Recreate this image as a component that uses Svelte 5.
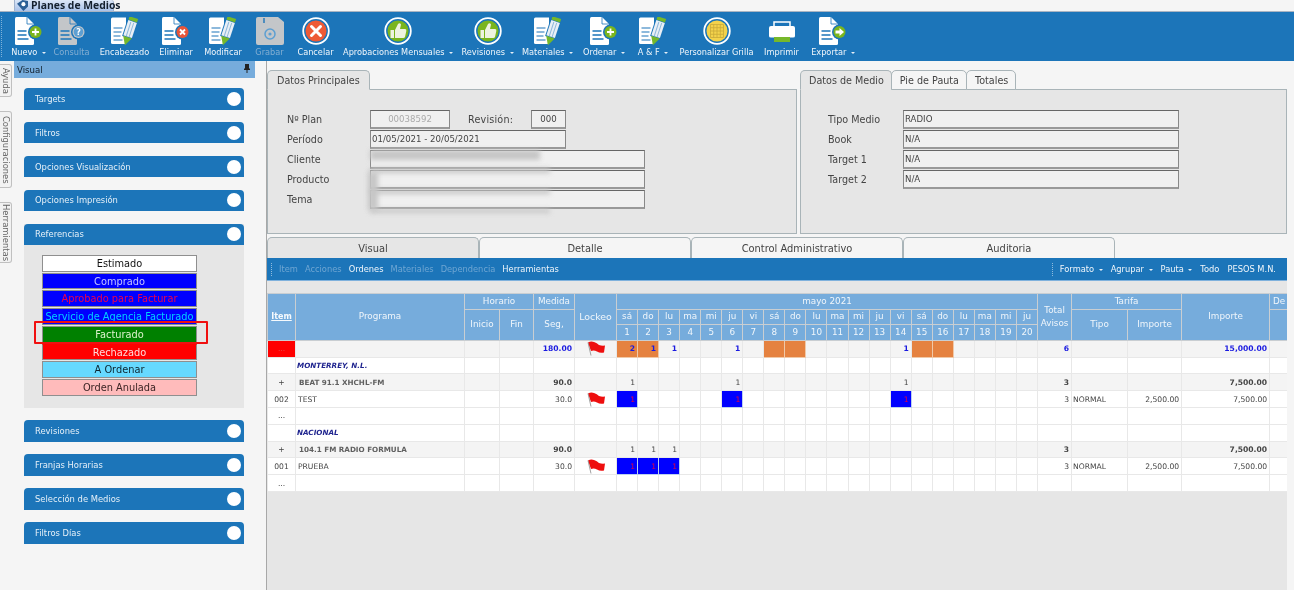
<script>
  const tools = [
    { label: 'Nuevo', icon: 'doc', badge: 'plus', w: 33, m: 0, caret: true },
    { label: 'Consulta', icon: 'docgray', w: 37, m: 8, dim: true },
    { label: 'Encabezado', icon: 'pencil', w: 51, m: 9 },
    { label: 'Eliminar', icon: 'doc', badge: 'x', w: 32, m: 10 },
    { label: 'Modificar', icon: 'pencil', w: 40, m: 11 },
    { label: 'Grabar', icon: 'floppy', w: 29, m: 12, dim: true },
    { label: 'Cancelar', icon: 'cancel', w: 37, m: 13 },
    { label: 'Aprobaciones Mensuales', icon: 'thumb', w: 108, m: 10, caret: true },
    { label: 'Revisiones', icon: 'thumb', w: 51, m: 10, caret: true },
    { label: 'Materiales', icon: 'pencil', w: 51, m: 9, caret: true },
    { label: 'Ordenar', icon: 'doc', badge: 'plus', w: 42, m: 10, caret: true },
    { label: 'A & F', icon: 'pencil', w: 28, m: 14, caret: true },
    { label: 'Personalizar Grilla', icon: 'grid', w: 75, m: 12 },
    { label: 'Imprimir', icon: 'printer', w: 35, m: 10 },
    { label: 'Exportar', icon: 'doc', badge: 'arrow', w: 46, m: 11, caret: true }
  ];
  const sideTabs = [
    { label: 'Ayuda', h: 33 },
    { label: 'Configuraciones', h: 77 },
    { label: 'Herramientas', h: 61 }
  ];
  const topSections = ['Targets', 'Filtros', 'Opciones Visualización', 'Opciones Impresión'];
  const bottomSections = ['Revisiones', 'Franjas Horarias', 'Selección de Medios', 'Filtros Días'];
  const legend = [
    { t: 'Estimado', c: 'est' },
    { t: 'Comprado', c: 'com' },
    { t: 'Aprobado para Facturar', c: 'apr' },
    { t: 'Servicio de Agencia Facturado', c: 'ser' },
    { t: 'Facturado', c: 'fac' },
    { t: 'Rechazado', c: 'rec' },
    { t: 'A Ordenar', c: 'ord' },
    { t: 'Orden Anulada', c: 'anu' }
  ];
  const names = ['sá', 'do', 'lu', 'ma', 'mi', 'ju', 'vi'];
  const days = Array.from({ length: 20 }, (_, i) => ({ n: i + 1, name: names[i % 7] }));
  const rows = [
    { kind: 'sum', item: '...', medida: '180.00', flag: true, marks: { 1: ['2', 'or'], 2: ['1', 'or'], 3: ['1', ''], 6: ['1', ''], 8: ['', 'or'], 9: ['', 'or'], 14: ['1', ''], 15: ['', 'or'], 16: ['', 'or'] }, total: '6', imp: '15,000.00' },
    { kind: 'group', prog: 'MONTERREY, N.L.' },
    { kind: 'sub', item: '+', prog: 'BEAT 91.1 XHCHL-FM', medida: '90.0', marks: { 1: ['1', ''], 6: ['1', ''], 14: ['1', ''] }, total: '3', imp: '7,500.00' },
    { kind: 'line', item: '002', prog: 'TEST', medida: '30.0', flag: true, marks: { 1: ['1', 'bl'], 6: ['1', 'bl'], 14: ['1', 'bl'] }, total: '3', tipo: 'NORMAL', tar: '2,500.00', imp: '7,500.00' },
    { kind: 'dots', item: '...' },
    { kind: 'group', prog: 'NACIONAL' },
    { kind: 'sub', item: '+', prog: '104.1 FM RADIO FORMULA', medida: '90.0', marks: { 1: ['1', ''], 2: ['1', ''], 3: ['1', ''] }, total: '3', imp: '7,500.00' },
    { kind: 'line', item: '001', prog: 'PRUEBA', medida: '30.0', flag: true, marks: { 1: ['1', 'bl'], 2: ['1', 'bl'], 3: ['1', 'bl'] }, total: '3', tipo: 'NORMAL', tar: '2,500.00', imp: '7,500.00' },
    { kind: 'dots', item: '...' }
  ];
</script>

{#snippet badge(kind)}
  {#if kind === 'plus'}
    <circle cx="20.5" cy="15" r="7.5" fill="#1c75b9" /><circle cx="20.5" cy="15" r="6" fill="#7ab51d" />
    <path d="M20.5 11.5v7M17 15h7" stroke="#fff" stroke-width="1.8" />
  {:else if kind === 'x'}
    <circle cx="20.5" cy="15" r="7.5" fill="#1c75b9" /><circle cx="20.5" cy="15" r="6" fill="#e8553a" />
    <path d="M18 12.5l5 5M23 12.5l-5 5" stroke="#fff" stroke-width="1.8" />
  {:else if kind === 'arrow'}
    <circle cx="20.5" cy="15" r="7.5" fill="#1c75b9" /><circle cx="20.5" cy="15" r="6" fill="#7ab51d" />
    <path d="M16.5 13.5h4v-2.5l4.5 4-4.5 4v-2.5h-4z" fill="#fff" />
  {/if}
{/snippet}

{#snippet page(fill, line)}
  <path d="M0 1.5Q0 0 1.5 0H12l7 7v19.5q0 1.5-1.5 1.5H1.5Q0 28 0 26.5z" fill={fill} />
  <path d="M12 0v7h7" fill="none" stroke={line} stroke-width="0.8" />
  <path d="M2.5 14h9M2.5 18h9M2.5 22h11" stroke={line} stroke-width="1.3" />
{/snippet}

{#snippet icon(t)}
  <svg class="ic" viewBox="0 0 28 28" aria-hidden="true">
    {#if t.icon === 'doc'}
      {@render page('#fff', '#1c75b9')}
      {@render badge(t.badge)}
    {:else if t.icon === 'docgray'}
      {@render page('#c3c6c9', '#1c75b9')}
      <circle cx="20.5" cy="15" r="7.5" fill="#1c75b9" /><circle cx="20.5" cy="15" r="6" fill="#c3c6c9" />
      <circle cx="20.5" cy="15" r="4.8" fill="#5d9fd2" />
      <text x="20.5" y="18.2" class="q">?</text>
    {:else if t.icon === 'pencil'}
      <path d="M0 2q0-1.500 1.500-1.500H15V27H1.500Q0 27 0 25.500z" fill="#fff" />
      <path d="M2.500 11h9M2.500 15h8M2.500 19h7M2.500 23h9" stroke="#1c75b9" stroke-width="1.200" />
      <g transform="translate(18.500 14) rotate(18)">
        <rect x="-5.500" y="-12" width="11" height="19" fill="#1c75b9" />
        <rect x="-4.500" y="-10" width="9" height="16" fill="#e9eff5" />
        <path d="M-1.500-9V6M1.500-9V6" stroke="#8fb9dc" stroke-width="1" />
        <rect x="-4.500" y="-14" width="9" height="3.500" fill="#76b82a" />
        <path d="M-4.500 6.500h9L0 15z" fill="#76b82a" />
      </g>
    {:else if t.icon === 'floppy'}
      <path d="M2 0h20l6 5v21q0 2-2 2H2q-2 0-2-2V2q0-2 2-2z" fill="#c3c6c9" />
      <path d="M8 0v5" stroke="#1c75b9" stroke-width="1.400" transform="translate(0 1)" />
      <circle cx="14" cy="17" r="5" fill="none" stroke="#5d9fd2" stroke-width="1.500" />
      <circle cx="14" cy="17" r="1.600" fill="#5d9fd2" />
    {:else if t.icon === 'cancel'}
      <circle cx="14" cy="14" r="12.800" fill="none" stroke="#fff" stroke-width="1.800" />
      <circle cx="14" cy="14" r="10.500" fill="#ee5a36" />
      <path d="M9.500 9.500l9 9M18.500 9.500l-9 9" stroke="#fff" stroke-width="3" stroke-linecap="round" />
    {:else if t.icon === 'thumb'}
      <circle cx="14" cy="14" r="12.800" fill="none" stroke="#fff" stroke-width="1.800" />
      <circle cx="14" cy="14" r="10.500" fill="#7ab51d" />
      <path d="M6.500 13h3.500v8H6.500zM11 13l3-6q1.800-1.500 3 .5l-1 4.500h5q1.800 0 1.300 2l-1.200 5.500q-.3 1.500-2 1.500H11z" fill="#eef3e0" />
    {:else if t.icon === 'grid'}
      <circle cx="14" cy="14" r="12.800" fill="none" stroke="#fff" stroke-width="1.800" />
      <circle cx="14" cy="14" r="10.500" fill="#f3d24b" />
      <path d="M7.500 7.500h13v13h-13zM7.500 10.700h13M7.500 14h13M7.500 17.300h13M10.700 7.500v13M14 7.500v13M17.300 7.500v13" fill="none" stroke="#c9a93a" stroke-width="0.800" />
    {:else if t.icon === 'printer'}
      <path d="M6 5h16v5H6z" fill="none" stroke="#fff" stroke-width="1.500" />
      <path d="M1 11q0-2 2-2h22q2 0 2 2v8q0 1.500-2 1.500H3q-2 0-2-1.500z" fill="#fff" />
      <path d="M6 20h16v5H6z" fill="#76b82a" />
    {/if}
  </svg>
{/snippet}

{#snippet flag()}
  <svg class="flag" viewBox="0 0 20 15" aria-hidden="true">
    <path d="M2 1.500q3-1.500 6-.5t5 3q3 1 6 .5l-1 7q-4 1-7-1-3-1.500-6-.5z" fill="#ee0e0e" />
    <path d="M2 1.500l3 13" stroke="#8a8a8a" stroke-width="0.800" />
  </svg>
{/snippet}

<div class="page">
  <div class="topstrip">
    <div class="apptab">
      <svg class="tabicon" viewBox="0 0 14 12" aria-hidden="true"><path d="M1 4l6-4 6 1v6l-5 5z" fill="#2b5f96" /><circle cx="8" cy="4.500" r="2.200" fill="#fff" /></svg>
      <span>Planes de Medios</span>
    </div>
  </div>

  <div class="toolbar">
    <div class="grip"></div>
    {#each tools as t}
      <div class="tool" class:dim={t.dim} style="width:{t.w}px;margin-left:{t.m}px">
        {@render icon(t)}
        <span class="tl">{t.label}{#if t.caret}<i class="caret"></i>{/if}</span>
      </div>
    {/each}
  </div>

  <div class="work">
    <div class="sidetabs">
      {#each sideTabs as s}
        <div class="sidetab" style="height:{s.h}px"><span>{s.label}</span></div>
      {/each}
    </div>

    <aside class="visual">
      <div class="vhead"><span>Visual</span>
        <svg class="pin" viewBox="0 0 8 9" aria-hidden="true"><path d="M2 0h4v4l1 1v1H4.500v3h-1V6H1V5l1-1z" fill="#222" /></svg>
      </div>
      <div class="accordion">
        {#each topSections as s}
          <div class="acc"><span>{s}</span><b></b></div>
        {/each}
        <div class="openblock">
          <div class="acc"><span>Referencias</span><b></b></div>
          <div class="legend">
            {#each legend as l}
              <div class="lg {l.c}">{l.t}</div>
            {/each}
          </div>
        </div>
        {#each bottomSections as s}
          <div class="acc"><span>{s}</span><b></b></div>
        {/each}
      </div>
      <div class="redmark"></div>
    </aside>

    <main class="content">
      <div class="panels">
        <section class="pane left">
          <div class="tabs"><div class="tab on">Datos Principales</div></div>
          <div class="body form">
            <div class="frow"><label>Nº Plan</label><div class="inp plan">00038592</div><label class="rev">Revisión:</label><div class="inp revv">000</div></div>
            <div class="frow"><label>Período</label><div class="inp per">01/05/2021 - 20/05/2021</div></div>
            <div class="frow"><label>Cliente</label><div class="inp long"></div></div>
            <div class="frow"><label>Producto</label><div class="inp long"></div></div>
            <div class="frow"><label>Tema</label><div class="inp long"></div></div>
            <div class="smear s1"></div>
            <div class="smear s2"></div>
            <div class="smear s3"></div>
            <div class="smear s4"></div>
            <div class="smear s5"></div>
          </div>
        </section>
        <section class="pane right">
          <div class="tabs">
            <div class="tab on">Datos de Medio</div>
            <div class="tab">Pie de Pauta</div>
            <div class="tab">Totales</div>
          </div>
          <div class="body form r">
            <div class="frow"><label>Tipo Medio</label><div class="inp wide">RADIO</div></div>
            <div class="frow"><label>Book</label><div class="inp wide">N/A</div></div>
            <div class="frow"><label>Target 1</label><div class="inp wide">N/A</div></div>
            <div class="frow"><label>Target 2</label><div class="inp wide">N/A</div></div>
          </div>
        </section>
      </div>

      <div class="gridtabs">
        <div class="gt on">Visual</div>
        <div class="gt">Detalle</div>
        <div class="gt">Control Administrativo</div>
        <div class="gt">Auditoria</div>
      </div>

      <div class="gridbar">
        <div class="gl">
          <i class="dots"></i>
          <span class="off">Item</span><span class="off">Acciones</span><span>Ordenes</span><span class="off">Materiales</span><span class="off">Dependencia</span><span>Herramientas</span>
        </div>
        <div class="gr">
          <i class="dots"></i>
          <span>Formato<i class="caret"></i></span><span>Agrupar<i class="caret"></i></span><span>Pauta<i class="caret"></i></span><span>Todo</span><span>PESOS M.N.</span>
        </div>
      </div>

      <div class="gridarea">
        <table>
          <colgroup>
            <col class="c28" /><col class="c169" /><col class="c35" /><col class="c34" /><col class="c41" /><col class="c42" />
            {#each days as d}<col class="cday" />{/each}
            <col class="c34" /><col class="c56" /><col class="c54" /><col class="c88" /><col class="c18" />
          </colgroup>
          <thead>
            <tr>
              <th rowspan="3"><u>Item</u></th>
              <th rowspan="3">Programa</th>
              <th colspan="2">Horario</th>
              <th>Medida</th>
              <th rowspan="3" class="lock">Lockeo</th>
              <th colspan="20">mayo 2021</th>
              <th rowspan="3">Total<br />Avisos</th>
              <th colspan="2">Tarifa</th>
              <th rowspan="3">Importe</th>
              <th class="de">De</th>
            </tr>
            <tr>
              <th rowspan="2">Inicio</th>
              <th rowspan="2">Fin</th>
              <th rowspan="2">Seg,</th>
              {#each days as d}<th>{d.name}</th>{/each}
              <th rowspan="2">Tipo</th>
              <th rowspan="2">Importe</th>
              <th rowspan="2"></th>
            </tr>
            <tr>
              {#each days as d}<th>{d.n}</th>{/each}
            </tr>
          </thead>
          <tbody>
            {#each rows as r}
              <tr class={r.kind}>
                <td class="item">{r.item ?? ''}</td>
                <td class="prog">{r.prog ?? ''}</td>
                <td></td><td></td>
                <td class="num">{r.medida ?? ''}</td>
                <td class="fl">{#if r.flag}{@render flag()}{/if}</td>
                {#each days as d}
                  <td class="day {r.marks?.[d.n]?.[1] ?? ''}">{r.marks?.[d.n]?.[0] ?? ''}</td>
                {/each}
                <td class="num tot">{r.total ?? ''}</td>
                <td class="tipo">{r.tipo ?? ''}</td>
                <td class="num">{r.tar ?? ''}</td>
                <td class="num imp">{r.imp ?? ''}</td>
                <td></td>
              </tr>
            {/each}
          </tbody>
        </table>
      </div>
    </main>
  </div>
</div>

<style>
  :global(body) { margin: 0; background: #f5f5f5; }
  .page {
    width: 1294px; height: 590px; overflow: hidden; background: #f5f5f5; position: relative;
    font-family: "DejaVu Sans", "Liberation Sans", sans-serif; font-size: 8.6px; color: #444;
    display: flex; flex-direction: column; filter: blur(0.3px);
  }
  .topstrip { height: 12px; flex: none; padding-left: 14px; box-sizing: border-box; border-bottom: 1px solid #a9b4c2; }
  .apptab {
    width: 100px; height: 11px; box-sizing: border-box; padding: 0 0 0 1px;
    background: linear-gradient(#dce7f7, #a9c2ea); border: 1px solid #9fb1cc; border-top: 0; border-bottom: 0; border-radius: 0 3px 0 0;
    display: flex; align-items: flex-start; gap: 2px; font-weight: bold; font-size: 10.400px; line-height: 10px; color: #14202e; font-family: "Open Sans", sans-serif; white-space: nowrap;
  }
  .tabicon { width: 13px; height: 11px; flex: none; }

  .toolbar { height: 49px; flex: none; background: #1c75b9; display: flex; padding-left: 12px; box-sizing: border-box; position: relative; }
  .grip { position: absolute; left: 1px; top: 4px; bottom: 4px; border-left: 1px dotted #7fb2d9; }
  .tool { flex: none; display: flex; flex-direction: column; align-items: center; padding-top: 5px; color: #f0f6fb; white-space: nowrap; }
  .tool.dim { color: #83aed2; }
  .ic { width: 28px; height: 28px; flex: none; }
  .tl { margin-top: 2px; font-size: 8.200px; line-height: 11px; }
  .q { font: bold 8px "DejaVu Sans", sans-serif; fill: #fff; text-anchor: middle; }
  .caret { display: inline-block; margin-left: 4.500px; vertical-align: 1px; border: 2px solid transparent; border-top: 2.500px solid #e6eff7; border-bottom: 0; }

  .work { flex: 1; display: flex; min-height: 0; position: relative; }
  .sidetabs { width: 12px; flex: none; padding-top: 3px; display: flex; flex-direction: column; gap: 14px; }
  .sidetab {
    box-sizing: border-box; width: 12px; background: #f2f2f2; border: 1px solid #c0c0c0; border-left: 0; border-radius: 0 3px 3px 0;
    writing-mode: vertical-rl; text-align: center; color: #666; font-size: 8.400px; line-height: 10px; white-space: nowrap; overflow: hidden;
  }
  .visual { width: 241px; margin-left: 2px; margin-right: 11px; flex: none; position: relative; }
  .vhead { height: 17px; background: #76acdc; display: flex; justify-content: space-between; align-items: center; padding: 0 4px 0 3px; color: #101c28; font-size: 8.600px; }
  .pin { width: 8px; height: 9px; margin-bottom: 3px; }
  .accordion { padding: 10px 11px 0 10px; display: flex; flex-direction: column; gap: 12.400px; }
  .acc {
    height: 21.500px; background: #1c75b9; border-radius: 4px 4px 0 0; display: flex; align-items: center; justify-content: space-between;
    padding: 0 3px 0 11px; color: #e6f0f8; font-size: 8.400px; box-sizing: border-box;
  }
  .acc b { width: 14px; height: 14px; border-radius: 50%; background: #fff; }
  .openblock { background: #e6e6e6; }
  .legend { padding: 10px 47px 12px 18px; display: flex; flex-direction: column; gap: 1px; height: 163px; box-sizing: border-box; }
  .lg {
    height: 16.700px; box-sizing: border-box; border: 1px solid #8f8f8f; text-align: center; font-size: 9.800px; line-height: 15px; white-space: nowrap; overflow: hidden;
  }
  .est { background: #fff; color: #111; }
  .com { background: #0000ff; color: #c4c4ff; }
  .apr { background: #0000ff; color: #f0004a; }
  .ser { background: #0000ff; color: #00d0ff; }
  .fac { background: #008000; color: #dcf2cc; }
  .rec { background: #ff0000; color: #ffdcdc; border-color: #ff0000 #8f8f8f #8f8f8f; }
  .ord { background: #66d9ff; color: #0c2530; }
  .anu { background: #ffbbbb; color: #3c2424; }
  .redmark { position: absolute; left: 20px; top: 260px; width: 174px; height: 23px; box-sizing: border-box; border: 2px solid #f01010; border-radius: 1px; }

  .content { width: 1021px; flex: none; border-left: 1px solid #a8a8a8; box-sizing: border-box; display: flex; flex-direction: column; min-width: 0; }
  .panels { display: flex; gap: 3px; height: 173px; padding-top: 9px; box-sizing: border-box; flex: none; }
  .pane { display: flex; flex-direction: column; min-width: 0; }
  .pane.left { width: 530px; }
  .pane.right { flex: 1; }
  .tabs { display: flex; height: 20px; flex: none; margin-bottom: -1px; position: relative; z-index: 1; }
  .tab {
    box-sizing: border-box; height: 20px; padding: 0 9px; line-height: 19px; font-size: 9.600px; background: #f5f5f5; color: #444;
    border: 1px solid #a9b4b8; border-radius: 5px 5px 0 0; white-space: nowrap;
  }
  .right .tab { padding: 0 7px 0 8px; }
  .tab + .tab { margin-left: -1px; }
  .tab.on { background: #e6e6e6; border-bottom-color: #e6e6e6; }
  .body { flex: 1; background: #e6e6e6; border: 1px solid #a9b4b8; box-sizing: border-box; position: relative; padding-top: 19px; }
  .frow { display: flex; align-items: center; height: 20.200px; padding-left: 19px; }
  .frow label { width: 83px; flex: none; font-size: 9.600px; color: #444; white-space: nowrap; }
  .form.r .frow { padding-left: 27px; }
  .form.r .frow label { width: 75px; }
  .inp {
    height: 19px; box-sizing: border-box; background: #f0f0f0; border: 1px solid #777; border-color: #666 #888 #999 #888; border-bottom-width: 2px;
    font-size: 8.600px; line-height: 16px; color: #444; white-space: nowrap; padding-left: 1px;
  }
  .plan { width: 80px; text-align: center; color: #aaa; padding: 0; }
  .rev.rev { width: 63px; margin-left: 18px; letter-spacing: 0.2px; }
  .revv { width: 35px; text-align: center; padding: 0; }
  .per { width: 196px; }
  .long { width: 275px; }
  .wide { width: 276px; }
  .smear { position: absolute; background: #c6c6c6; filter: blur(2.500px); }
  .s1 { left: 102px; top: 60px; width: 170px; height: 10px; }
  .s2 { left: 102px; top: 78px; width: 180px; height: 5px; }
  .s3 { left: 102px; top: 99px; width: 180px; height: 5px; }
  .s4 { left: 102px; top: 119px; width: 180px; height: 4px; }
  .s5 { left: 100px; top: 82px; width: 10px; height: 38px; }

  .gridtabs { display: flex; height: 21px; flex: none; margin-top: 3px; }
  .gt {
    width: 212px; flex: none; box-sizing: border-box; background: #f5f5f5; border: 1px solid #a9b4b8; border-bottom: 0; border-radius: 5px 5px 0 0;
    text-align: center; line-height: 21px; font-size: 9.900px; color: #444;
  }
  .gt.on { background: #e6e6e6; }
  .gridbar { height: 22px; flex: none; background: #1c75b9; display: flex; justify-content: space-between; align-items: center; color: #f0f6fb; font-size: 8.300px; }
  .gl, .gr { display: flex; align-items: center; gap: 7px; white-space: nowrap; }
  .gl { padding-left: 4px; }
  .gr { padding-right: 11px; gap: 8px; }
  .gr .dots { margin-right: -1px; }
  .off { color: #6fa6d3; }
  .dots { width: 0; height: 13px; border-left: 1px dotted #8fbbdd; }

  .gridarea { flex: 1; min-height: 0; background: #e6e6e6; border-top: 1px solid #7fb1dc; padding-top: 12px; overflow: hidden; }
  table { border-collapse: collapse; table-layout: fixed; width: 1020px; font-size: 7.600px; color: #444; }
  .c28 { width: 28px; } .c169 { width: 169px; } .c35 { width: 35px; } .c34 { width: 34px; } .c41 { width: 41px; } .c42 { width: 42px; }
  .cday { width: 21.050px; } .c56 { width: 56px; } .c54 { width: 54px; } .c88 { width: 88px; } .c18 { width: 18px; }
  th {
    background: #76acdc; color: #f0f6fb; font-weight: normal; border: 1px solid #c9ced2; padding: 0; height: 14.600px; font-size: 8.800px; line-height: 13px;
    white-space: nowrap; overflow: hidden;
  }
  th.de { text-align: left; padding-left: 3px; }
  th.lock { font-size: 9.400px; }
  th u { color: #f6fafd; font-weight: bold; font-size: 8px; }
  td { border: 1px solid #e8e8e8; padding: 0; height: 16.800px; background: #fff; white-space: nowrap; overflow: hidden; box-sizing: border-box; }
  tr.sum td, tr.sub td { background: #f4f4f4; }
  tr.sum td.item { background: #ff0000; color: #e24a4a; }
  .item { text-align: center; }
  .prog { padding-left: 2px; }
  .num { text-align: right; padding-right: 2px; }
  .day { text-align: right; padding-right: 2px; }
  .tot { padding-right: 2px; }
  .tipo { padding-left: 1px; }
  .fl { padding: 0; text-align: center; background: #fff; }
  .flag { width: 20px; height: 15px; display: block; margin: 0 auto; }
  tr.sum td.fl { background: #f4f4f4; }
  tr.group .prog { font-style: italic; font-weight: bold; color: #20258f; padding-left: 1px; font-size: 7.200px; }
  tr.sum .num, tr.sum .day { color: #1a1ae0; font-weight: bold; }
  tr.sub .prog { padding-left: 3px; font-weight: bold; color: #606060; font-size: 7.200px; }
  tr.sub .num { font-size: 7.600px; font-weight: bold; }
  tr.line .num { font-size: 7.600px; }
  td.or { background: #e58240 !important; border-color: #f0c9a8; }
  td.bl { background: #0000ff !important; color: #e8003c !important; border-color: #bcd0ee; }
</style>
